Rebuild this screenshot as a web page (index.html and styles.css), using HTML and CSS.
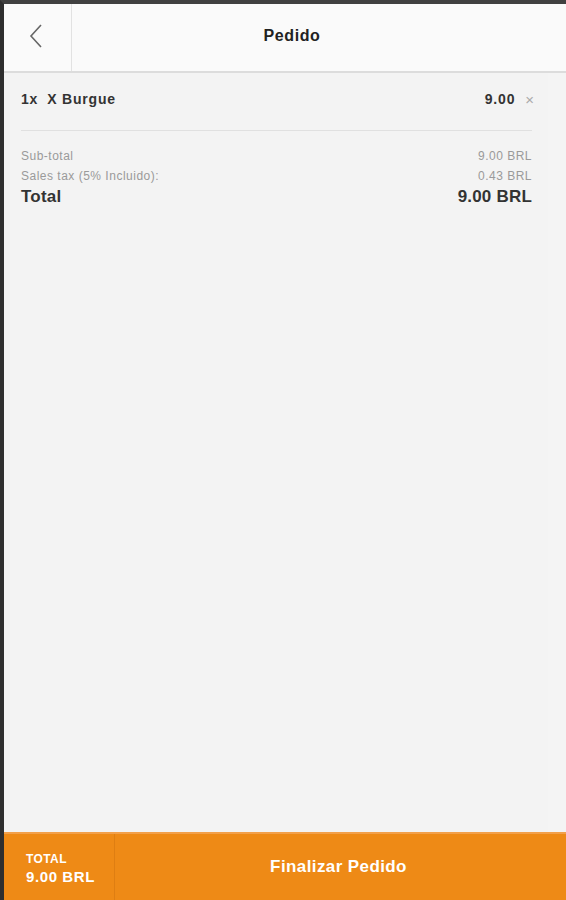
FILE: index.html
```html
<!DOCTYPE html>
<html>
<head>
<meta charset="utf-8">
<link rel="stylesheet" href="styles.css">
</head>
<body>
<div class="app">
  <header class="topbar">
    <div class="back">
      <svg width="16" height="26" viewBox="0 0 16 26"><path d="M13 2 L3 13 L13 24" fill="none" stroke="#666" stroke-width="1.6"/></svg>
    </div>
    <div class="title">Pedido</div>
  </header>
  <main class="content">
    <div class="inner">
      <div class="item">
        <span class="qty">1x</span>
        <span class="name">X Burgue</span>
        <span class="price">9.00</span>
        <span class="remove">×</span>
      </div>
      <div class="divider"></div>
      <div class="sumrow"><span>Sub-total</span><span>9.00 BRL</span></div>
      <div class="sumrow"><span>Sales tax (5% Incluido):</span><span>0.43 BRL</span></div>
      <div class="totalrow"><span>Total</span><span>9.00 BRL</span></div>
    </div>
    <div class="track"></div>
  </main>
  <footer class="bottombar">
    <div class="ftotal">
      <div class="flabel">TOTAL</div>
      <div class="fvalue">9.00 BRL</div>
    </div>
    <div class="finish">Finalizar Pedido</div>
  </footer>
</div>
</body>
</html>
```
FILE: styles.css
```css
* { box-sizing: border-box; }
html, body { margin: 0; padding: 0; height: 100%; }
body { font-family: "Liberation Sans", Arial, sans-serif; background: #3a3a3a; }
.app {
  height: 900px;
  display: flex;
  flex-direction: column;
  border-top: 4px solid #404040;
  border-left: 4px solid #2e2e2e;
  background: #f3f3f3;
}
.topbar {
  height: 69px;
  flex: none;
  display: flex;
  background: #fafafa;
  border-bottom: 2px solid #dcdcdc;
}
.back {
  width: 68px;
  border-right: 1px solid #e2e2e2;
  display: flex;
  align-items: center;
  justify-content: center;
  padding-right: 4px;
  padding-bottom: 4px;
}
.title {
  flex: 1;
  display: flex;
  align-items: center;
  justify-content: center;
  font-size: 16px;
  letter-spacing: 0.6px;
  font-weight: bold;
  color: #222;
  padding-right: 54px;
  padding-bottom: 3px;
}
.content {
  flex: 1;
  display: flex;
  background: #f3f3f3;
}
.inner { flex: 1; padding: 16px 16px 0 17px; }
.track { width: 18px; background: #f4f4f4; }
.item {
  display: flex;
  align-items: center;
  font-size: 14px;
  letter-spacing: 0.8px;
  font-weight: bold;
  color: #333;
  height: 20px;
}
.qty { margin-right: 9px; }
.name { flex: 1; }
.price { margin-right: 10px; }
.remove { font-weight: normal; color: #aaa; font-size: 15px; letter-spacing: 0; margin-right: -2px; }
.divider { height: 1px; background: #e0e0e0; margin: 21px 0 15px; }
.sumrow {
  display: flex;
  justify-content: space-between;
  font-size: 12px;
  letter-spacing: 0.5px;
  color: #9a9a9a;
  line-height: 20px;
}
.totalrow {
  display: flex;
  justify-content: space-between;
  font-size: 17px;
  letter-spacing: 0.2px;
  font-weight: bold;
  color: #333;
  line-height: 22px;
  margin-top: 0;
}
.bottombar {
  height: 68px;
  flex: none;
  display: flex;
  background: #ee8a16;
  border-top: 2px solid #f2a04a;
  color: #fff;
}
.ftotal {
  width: 111px;
  border-right: 1px solid #de7e12;
  padding: 18px 0 0 22px;
  font-weight: bold;
}
.flabel { font-size: 12px; letter-spacing: 0.4px; line-height: 15px; }
.fvalue { font-size: 15px; letter-spacing: 0.6px; line-height: 20px; }
.finish {
  flex: 1;
  display: flex;
  align-items: center;
  justify-content: center;
  font-size: 17px;
  letter-spacing: 0.4px;
  font-weight: bold;
  padding-right: 4px;
}
```
